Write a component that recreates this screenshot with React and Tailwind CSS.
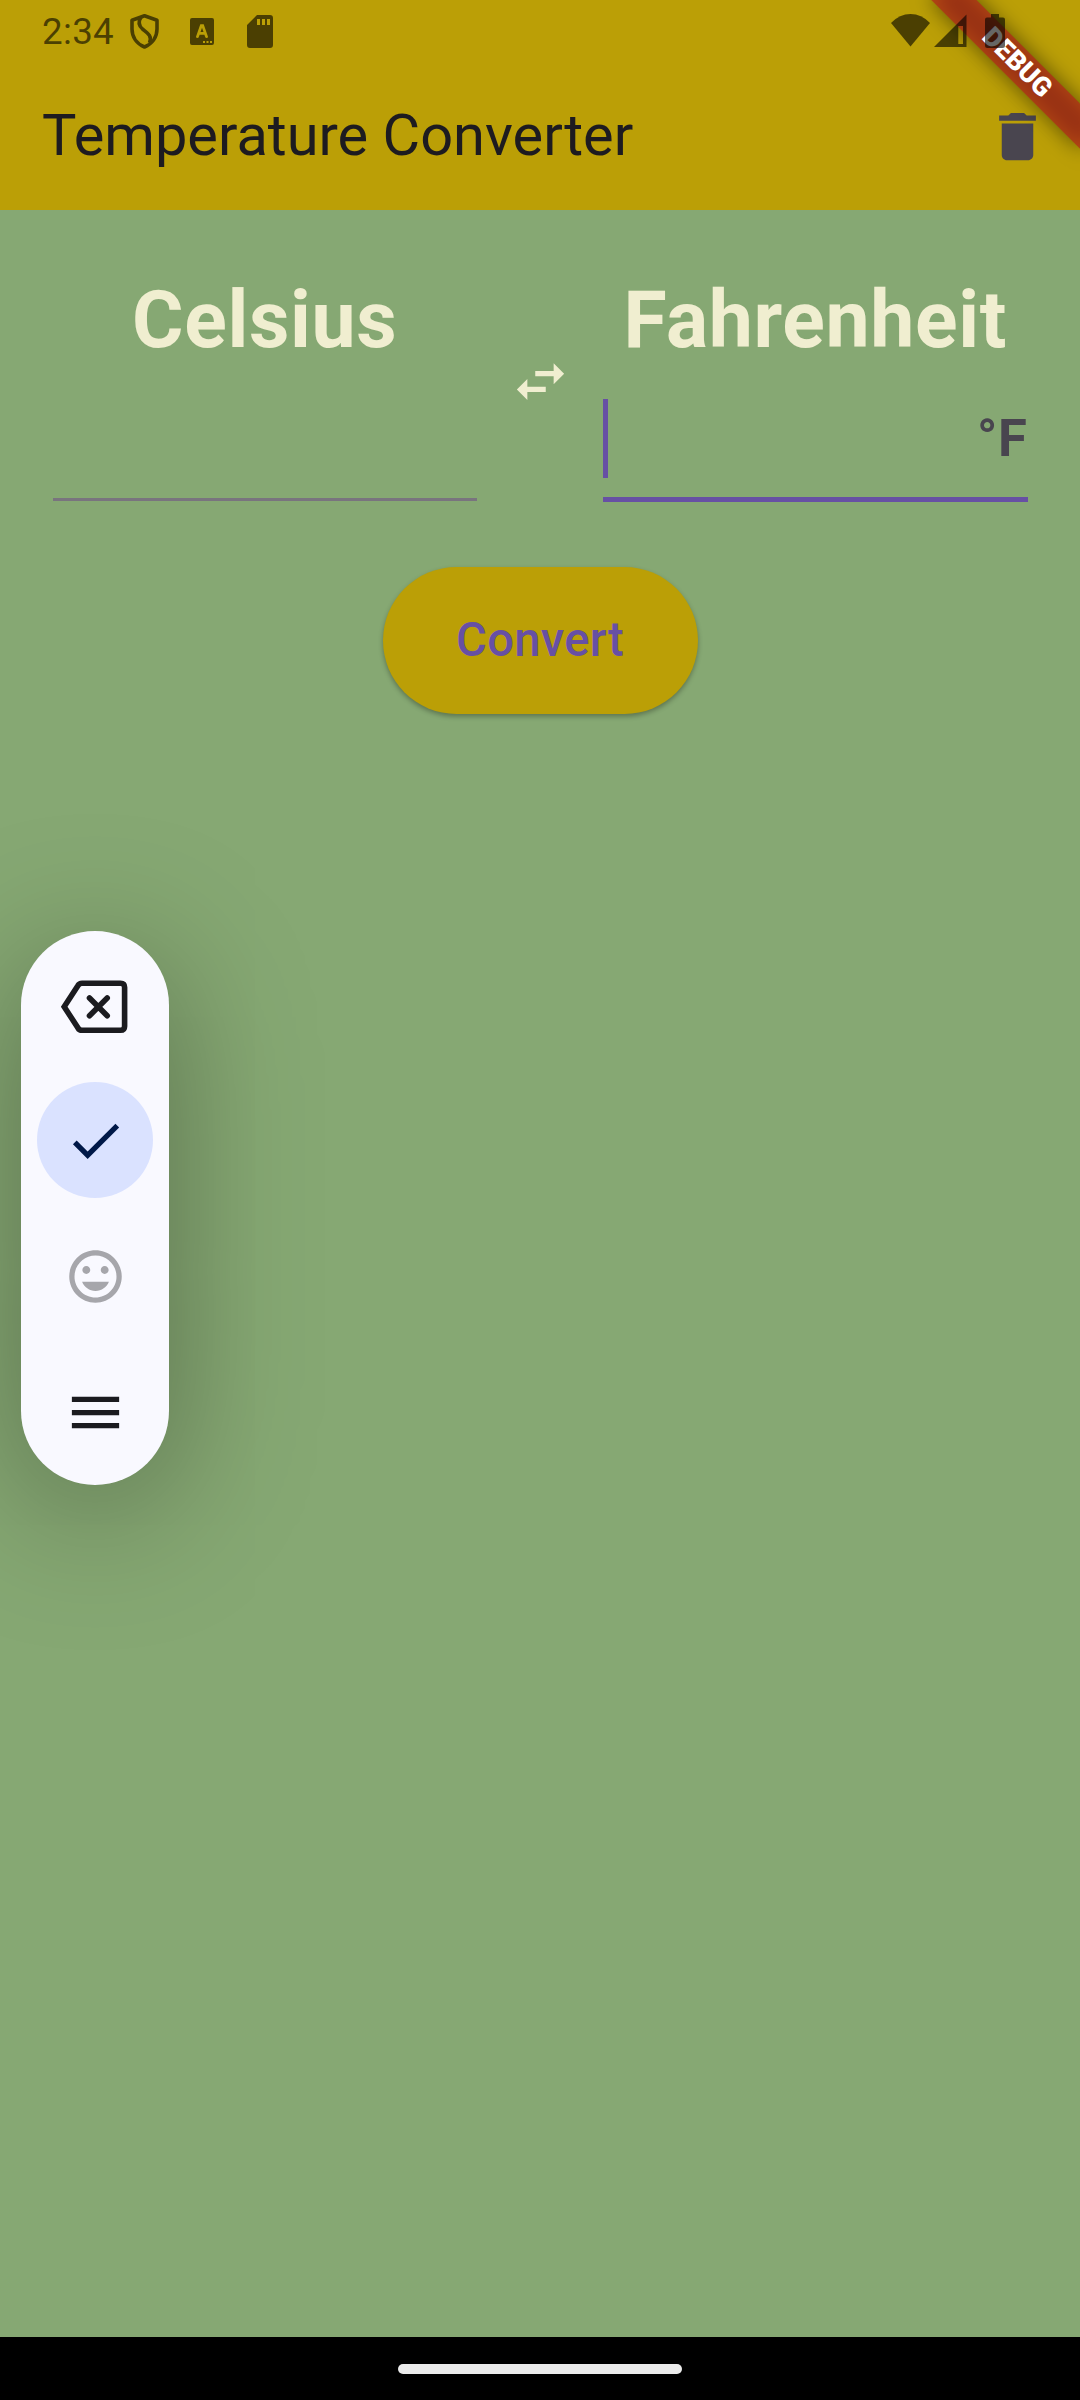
function Icon({ d, className }) {
  return (
    <svg viewBox="0 0 24 24" fill="currentColor" className={className}>
      <path d={d} />
    </svg>
  );
}

function DebugBanner() {
  return (
    <div className="pointer-events-none absolute top-0 right-0 h-[210px] w-[260px] overflow-hidden">
      <div className="absolute top-[47.25px] right-[-42px] h-[31.5px] w-[210px] rotate-45">
        <div className="absolute inset-0 bg-black/50 blur-[10.4px]" />
        <div className="absolute inset-0 flex items-center justify-center bg-[#b71c1c]/63 text-[26.8px] leading-none font-black text-white">
          DEBUG
        </div>
      </div>
    </div>
  );
}

function StatusBar() {
  return (
    <div className="relative flex h-[63px] items-start text-black/60">
      <span className="ml-[42px] w-[87px] pt-[10px] text-[36.75px] leading-[43px] tracking-[0.3px]">2:34</span>
      <svg viewBox="129 13 31 37" className="mt-[13px] h-[37px] w-[31px] text-black opacity-60" fill="none" stroke="currentColor" strokeWidth="3.6" strokeLinejoin="round">
        <path d="M144.500 15.800L157 20.200V29C157 37.500 152 44 144.500 47C137 44 132 37.500 132 29V20.200Z" />
        <path d="M141 17C138.500 21 138.500 25.500 142.500 29C147.500 33 152.500 36 149.500 43" />
      </svg>
      <svg viewBox="0 0 24 27" className="mt-[18px] ml-[30px] h-[27px] w-6">
        <path fill="currentColor" fillRule="evenodd" d="M2 0H22Q24 0 24 2V25Q24 27 22 27H2Q0 27 0 25V2Q0 0 2 0ZM10.300 6.200L6 18.800Q6 20 7.500 20Q8.500 20 9 18.500L9.600 16.700H14.400L15 18.500Q15.500 20 16.500 20Q18 20 18 18.800L13.700 6.200ZM12 9.800L13.500 14H10.500ZM13 23V25H15V23ZM16.500 23V25H18.500V23ZM20 23V25H22V23Z" />
      </svg>
      <svg viewBox="0 0 26 33" className="mt-[15px] ml-[33px] h-[33px] w-[26px]">
        <path fill="currentColor" fillRule="evenodd" d="M10 0H23Q26 0 26 3V30Q26 33 23 33H3Q0 33 0 30V10ZM10 4V10H13V4ZM15 4V10H18V4ZM20 4V10H23V4Z" />
      </svg>
      <div className="ml-auto flex pr-[75px]">
        <svg viewBox="0 0 39 33" className="mt-[14px] h-[33px] w-[39px]" fill="currentColor">
          <path d="M19.500 32.500L0 9Q8.500 0 19.500 0Q30.500 0 39 9Z" />
        </svg>
        <svg viewBox="0 0 33 33" className="mt-[14px] ml-[3.500px] h-[33px] w-[33px]" fill="currentColor">
          <path fillRule="evenodd" d="M32.500 0.500V33H0ZM24.300 12V30H29V12Z" />
        </svg>
        <svg viewBox="0 0 20 34" className="mt-[14px] ml-[18.500px] h-[34px] w-5" fill="currentColor">
          <path d="M6 0H14V3.500H18Q20 3.500 20 5.500V31.500Q20 34 17.500 34H2.500Q0 34 0 31.500V5.500Q0 3.500 2 3.500H6Z" />
        </svg>
      </div>
    </div>
  );
}

function Header() {
  return (
    <header className="relative h-[210px] bg-[#bb9f06]">
      <div className="flex h-[210px] items-center justify-between pt-[63px] pl-[42px]">
        <h1 className="pb-[2px] text-[57.75px] leading-none text-[#1d1b20]">Temperature Converter</h1>
        <button className="flex size-[126px] items-center justify-center text-[#49454f]">
          <Icon className="size-[63px]" d="M6 19c0 1.100.9 2 2 2h8c1.100 0 2-.9 2-2V7H6v12zM19 4h-3.500l-1-1h-5l-1 1H5v2h14V4z" />
        </button>
      </div>
      <DebugBanner />
      <div className="absolute inset-x-0 top-0">
        <StatusBar />
      </div>
    </header>
  );
}

function Field({ label, active, suffix }) {
  return (
    <div className="w-[424.5px]">
      <h2 className="text-center text-[78.75px] leading-[92px] font-bold tracking-[0.66px] text-[#f0eed0]">{label}</h2>
      <div
        className={
          active
            ? "mt-[13.5px] flex h-[122px] items-start justify-between border-b-[5px] border-[#6750a4] pt-[19.5px]"
            : "mt-[13.5px] h-[121.5px] border-b-[3px] border-[#79747e]"
        }
      >
        {active && <span className="h-[79px] w-[5.25px] bg-[#6750a4]" />}
        {suffix && <span className="text-[52.5px] leading-[79px] font-bold tracking-[0.66px] text-[#49454f]">{suffix}</span>}
      </div>
    </div>
  );
}

function KeyboardToolbar() {
  return (
    <div className="absolute top-[931px] left-[21px] flex h-[554px] w-[148px] flex-col items-center rounded-full bg-[#f9f9ff] shadow-[0_24px_142px_rgba(0,0,0,0.34)]">
      <svg viewBox="58 977 72 60" className="mt-[46px] mr-[2px] h-[60px] w-[72px]" fill="none" stroke="#1b1b1f" strokeWidth="5.600">
        <path strokeLinejoin="miter" d="M64.200 1006.700L78 985.500Q79.300 983.200 82 983.200H120.500Q124.600 983.200 124.600 987.300V1026.200Q124.600 1030.300 120.500 1030.300H82Q79.300 1030.300 78 1028Z" />
        <path strokeLinecap="round" d="M89.500 998L107.200 1015.700M107.200 998L89.500 1015.700" />
      </svg>
      <div className="mt-[45px] flex size-[116px] items-center justify-center rounded-full bg-[#dae2ff] text-[#001848]">
        <Icon className="size-[63px]" d="M9 16.170L4.830 12l-1.420 1.410L9 19 21 7l-1.410-1.410z" />
      </div>
      <Icon
        className="mt-[47px] ml-px size-[63px] text-[#a6a6ab]"
        d="M11.990 2C6.470 2 2 6.480 2 12s4.470 10 9.990 10C17.520 22 22 17.520 22 12S17.520 2 11.990 2zM12 20c-4.420 0-8-3.580-8-8s3.580-8 8-8 8 3.580 8 8-3.580 8-8 8zm3.500-9c.83 0 1.500-.67 1.500-1.500S16.330 8 15.500 8 14 8.670 14 9.500s.67 1.500 1.500 1.500zm-7 0c.83 0 1.500-.67 1.500-1.500S9.330 8 8.500 8 7 8.670 7 9.500 7.670 11 8.500 11zm3.500 6.500c2.330 0 4.310-1.460 5.110-3.500H6.890c.8 2.040 2.780 3.500 5.110 3.500z"
      />
      <Icon className="mt-[73px] ml-px size-[63px] text-[#1b1b1f]" d="M3 18h18v-2H3v2zm0-5h18v-2H3v2zm0-7v2h18V6H3z" />
    </div>
  );
}

export default function App() {
  return (
    <div className="relative flex h-[2400px] w-[1080px] flex-col overflow-hidden bg-[#86a873] font-[Roboto,sans-serif]">
      <Header />
      <main className="flex flex-1 flex-col items-center pt-[64px]">
        <div className="flex">
          <Field label="Celsius" />
          <div className="flex w-[126px] justify-center pt-[76px] text-[#f0eed0]">
            <Icon className="size-[63px]" d="M6.990 11L3 15l3.990 4v-3H14v-2H6.990v-3zM21 9l-3.990-4v3H10v2h7.010v3L21 9z" />
          </div>
          <Field label="Fahrenheit" active suffix="°F" />
        </div>
        <button className="mt-[65.5px] h-[147px] w-[315px] rounded-full bg-[#bb9f06] text-[47.25px] font-medium tracking-[0.26px] text-[#6750a4] shadow-[0_2.6px_5px_rgba(0,0,0,0.3)]">
          Convert
        </button>
      </main>
      <footer className="flex h-[63px] justify-center bg-black pt-[27px]">
        <div className="h-[10px] w-[284px] rounded-full bg-[#ebebeb]" />
      </footer>
      <KeyboardToolbar />
    </div>
  );
}
